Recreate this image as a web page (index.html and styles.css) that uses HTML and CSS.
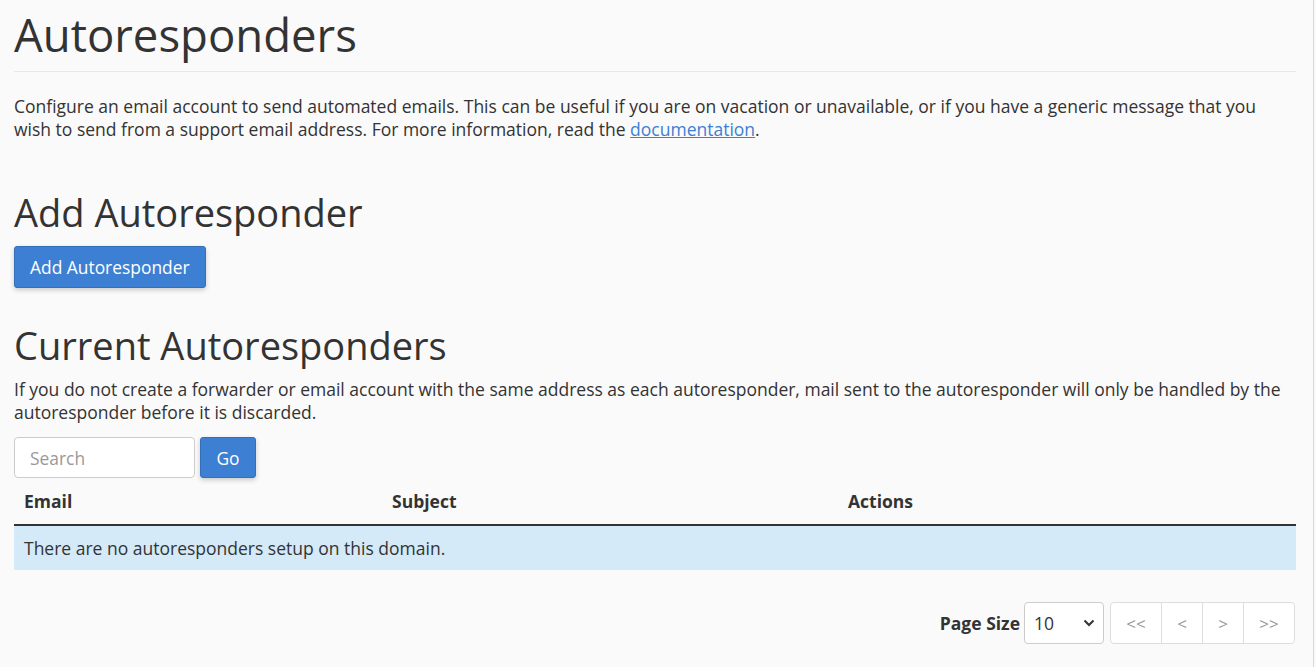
FILE: index.html
```html
<!DOCTYPE html>
<html lang="en">
<head>
<meta charset="utf-8">
<title>Autoresponders</title>
<link rel="stylesheet" href="styles.css">
</head>
<body>
<div class="page">
  <h1 class="page-title">Autoresponders</h1>
  <p class="intro">Configure an email account to send automated emails. This can be useful if you are on vacation or unavailable, or if you have a generic message that you wish to send from a support email address. For more information, read the <a href="#">documentation</a>.</p>

  <h2 class="section-title add-title">Add Autoresponder</h2>
  <button class="btn btn-primary btn-add">Add Autoresponder</button>

  <h2 class="section-title current-title">Current Autoresponders</h2>
  <p class="note">If you do not create a forwarder or email account with the same address as each autoresponder, mail sent to the autoresponder will only be handled by the autoresponder before it is discarded.</p>

  <div class="search-row">
    <input class="search-input" type="text" placeholder="Search">
    <button class="btn btn-primary btn-go">Go</button>
  </div>

  <table class="list">
    <thead>
      <tr>
        <th class="col-email">Email</th>
        <th class="col-subject">Subject</th>
        <th class="col-actions">Actions</th>
      </tr>
    </thead>
    <tbody>
      <tr class="info-row">
        <td colspan="3">There are no autoresponders setup on this domain.</td>
      </tr>
    </tbody>
  </table>

  <div class="pager">
    <label class="page-size-label">Page Size</label>
    <div class="select-wrap">
      <span class="select-value">10</span>
      <svg class="chev" width="12" height="8" viewBox="0 0 12 8"><path d="M1.5 1.5 L6 6 L10.5 1.5" fill="none" stroke="#333" stroke-width="2"/></svg>
    </div>
    <div class="pager-group">
      <span class="pg pg-first">&lt;&lt;</span>
      <span class="pg pg-prev">&lt;</span>
      <span class="pg pg-next">&gt;</span>
      <span class="pg pg-last">&gt;&gt;</span>
    </div>
  </div>
</div>
<div class="edge"></div>
</body>
</html>
```

FILE: styles.css
```css
html, body {
  margin: 0;
  padding: 0;
  background: #fafafa;
  height: 100%;
}
body {
  font-family: "Open Sans", "Liberation Sans", sans-serif;
  font-size: 17.5px;
  line-height: 23px;
  color: #333;
  position: relative;
  overflow: hidden;
}
.page {
  padding: 0 20px 0 14px;
}
.page-title {
  font-size: 45.5px;
  font-weight: 400;
  line-height: 50px;
  margin: 0;
  padding: 9px 0 12px;
  border-bottom: 1px solid #e8e8e8;
}
.intro {
  margin: 23px 0 0;
  padding-right: 10px;
}
.intro a {
  color: #3d80d3;
  text-decoration: underline;
}
.section-title {
  font-size: 38px;
  font-weight: 400;
  line-height: 42px;
  margin: 0;
}
.add-title {
  margin-top: 50px;
}
.btn {
  font-family: inherit;
  font-size: 17.4px;
  border-radius: 3px;
  cursor: pointer;
}
.btn-primary {
  background: #3d80d3;
  color: #fff;
  border: 1px solid #346fb8;
  box-shadow: 0 2px 5px rgba(0,0,0,0.2);
}
.btn-add {
  margin-top: 13px;
  height: 42px;
  padding: 0 15px;
  display: block;
}
.current-title {
  margin-top: 36px;
}
.note {
  margin: 12px 0 0;
}
.search-row {
  display: flex;
  gap: 5px;
  margin-top: 13px;
}
.search-input {
  width: 181px;
  height: 41px;
  box-sizing: border-box;
  border: 1px solid #ccc;
  border-radius: 4px;
  background: #fff;
  padding: 0 15px;
  font-family: inherit;
  font-size: 17.4px;
  color: #333;
}
.search-input::placeholder {
  color: #999;
}
.btn-go {
  width: 56px;
  height: 41px;
  padding: 0;
}
.list {
  width: 100%;
  border-collapse: collapse;
  margin-top: 0;
}
.list th {
  text-align: left;
  font-weight: 700;
  padding: 12px 10px 11px;
  border-bottom: 2px solid #333;
  line-height: 23px;
}
.col-email { width: 348px; }
.col-subject { width: 436px; }
.info-row td {
  background: #d4eaf8;
  padding: 11px 10px 10px;
  line-height: 23px;
}
.pager {
  display: flex;
  justify-content: flex-end;
  align-items: center;
  margin-top: 32px;
}
.page-size-label {
  font-weight: 700;
  margin-right: 4px;
}
.select-wrap {
  width: 80px;
  height: 42px;
  box-sizing: border-box;
  border: 1px solid #ccc;
  border-radius: 4px;
  background: #fff;
  display: flex;
  align-items: center;
  justify-content: space-between;
  padding: 0 8px 0 9px;
}
.pager-group {
  display: flex;
  margin-left: 6px;
  margin-right: 1px;
  height: 42px;
  border: 1px solid #ddd;
  border-radius: 4px;
  background: #fff;
  box-sizing: border-box;
}
.pg {
  display: flex;
  align-items: center;
  justify-content: center;
  color: #999;
  font-size: 17px;
  border-left: 1px solid #ddd;
}
.pg:first-child { border-left: 0; }
.pg-first { width: 50px; }
.pg-prev { width: 40px; }
.pg-next { width: 40px; }
.pg-last { width: 50px; }
.edge {
  position: absolute;
  top: 0;
  right: 2px;
  width: 1px;
  height: 100%;
  background: #d8d8d8;
}
```
